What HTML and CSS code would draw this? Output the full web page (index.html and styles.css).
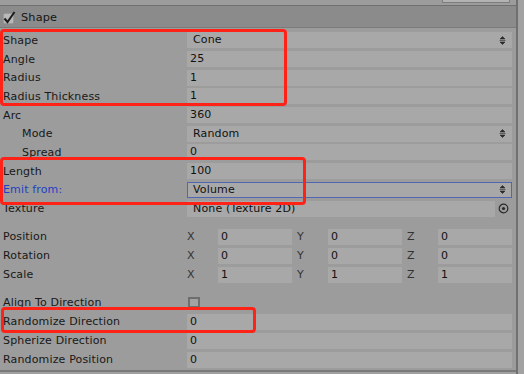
FILE: index.html
```html
<!DOCTYPE html>
<html>
<head>
<meta charset="utf-8">
<link rel="stylesheet" href="styles.css">
</head>
<body>
<div class="page">
  <div class="panel">
    <div class="topstrip"><div class="stub"></div></div>
    <div class="header">
      <svg class="toggle" width="14" height="14" viewBox="0 0 14 14">
        <rect x="0.5" y="2.5" width="10" height="10" rx="1.5" fill="#b9b9b9" stroke="#9a9a9a"/>
        <path d="M1.5 7.5 L4.5 11 L11.5 1" fill="none" stroke="#1c1c1c" stroke-width="2"/>
      </svg>
      <span class="title">Shape</span>
    </div>
    <div class="body">
      <div class="block tight">
        <div class="row"><span class="label">Shape</span><span class="field drop">Cone<svg class="arrows" width="7" height="9" viewBox="0 0 7 9"><path d="M3.5 0.5 L6 3 L1 3 Z M0.5 4.5 H6.5 M1 6 L6 6 L3.5 8.5 Z" fill="#2a2a2a" stroke="#2a2a2a" stroke-width="0.6"/></svg></span></div>
        <div class="row"><span class="label">Angle</span><span class="field">25</span></div>
        <div class="row"><span class="label">Radius</span><span class="field">1</span></div>
        <div class="row"><span class="label">Radius Thickness</span><span class="field">1</span></div>
        <div class="row"><span class="label">Arc</span><span class="field">360</span></div>
        <div class="row"><span class="label indent">Mode</span><span class="field drop">Random<svg class="arrows" width="7" height="9" viewBox="0 0 7 9"><path d="M3.5 0.5 L6 3 L1 3 Z M0.5 4.5 H6.5 M1 6 L6 6 L3.5 8.5 Z" fill="#2a2a2a" stroke="#2a2a2a" stroke-width="0.6"/></svg></span></div>
        <div class="row"><span class="label indent">Spread</span><span class="field">0</span></div>
        <div class="row"><span class="label">Length</span><span class="field">100</span></div>
        <div class="row"><span class="label focus">Emit from:</span><span class="field drop focused">Volume<svg class="arrows" width="7" height="9" viewBox="0 0 7 9"><path d="M3.5 0.5 L6 3 L1 3 Z M0.5 4.5 H6.5 M1 6 L6 6 L3.5 8.5 Z" fill="#2a2a2a" stroke="#2a2a2a" stroke-width="0.6"/></svg></span></div>
        <div class="row"><span class="label">Texture</span><span class="field obj">None (Texture 2D)</span><svg class="picker" width="11" height="11" viewBox="0 0 11 11"><circle cx="5.5" cy="5.5" r="4.3" fill="none" stroke="#2a2a2a" stroke-width="1.2"/><circle cx="5.5" cy="5.5" r="1.6" fill="#2a2a2a"/></svg></div>
      </div>
      <div class="block vec">
        <div class="row"><span class="label">Position</span>
          <div class="vector">
            <div class="comp"><span class="axis">X</span><span class="field">0</span></div>
            <div class="comp"><span class="axis">Y</span><span class="field">0</span></div>
            <div class="comp"><span class="axis">Z</span><span class="field">0</span></div>
          </div>
        </div>
        <div class="row"><span class="label">Rotation</span>
          <div class="vector">
            <div class="comp"><span class="axis">X</span><span class="field">0</span></div>
            <div class="comp"><span class="axis">Y</span><span class="field">0</span></div>
            <div class="comp"><span class="axis">Z</span><span class="field">0</span></div>
          </div>
        </div>
        <div class="row"><span class="label">Scale</span>
          <div class="vector">
            <div class="comp"><span class="axis">X</span><span class="field">1</span></div>
            <div class="comp"><span class="axis">Y</span><span class="field">1</span></div>
            <div class="comp"><span class="axis">Z</span><span class="field">1</span></div>
          </div>
        </div>
      </div>
      <div class="block last">
        <div class="row"><span class="label">Align To Direction</span><span class="check"></span></div>
        <div class="row"><span class="label">Randomize Direction</span><span class="field">0</span></div>
        <div class="row"><span class="label">Spherize Direction</span><span class="field">0</span></div>
        <div class="row"><span class="label">Randomize Position</span><span class="field">0</span></div>
      </div>
    </div>
    <div class="footer"></div>
    <div class="mark m1"></div>
    <div class="mark m2"></div>
    <div class="mark m3"></div>
  </div>
  <div class="scroll"></div>
</div>
</body>
</html>
```
FILE: styles.css
```css
* { box-sizing: border-box; }
html, body { margin: 0; padding: 0; }
body {
  background: #9c9c9c;
  font-family: "DejaVu Sans", Verdana, sans-serif;
  font-size: 11px;
  color: #181818;
  letter-spacing: 0.15px;
}
.page {
  display: flex;
  width: 524px;
  height: 374px;
  overflow: hidden;
}
.panel {
  position: relative;
  width: 516px;
  height: 374px;
  display: flex;
  flex-direction: column;
  background: #9c9c9c;
}
.scroll {
  flex: 1;
  border-left: 2px solid #707070;
  background: #a2a2a2;
}
.topstrip {
  height: 5px;
  display: flex;
}
.stub {
  margin-left: 442px;
  width: 68px;
  height: 3px;
  background: #b3b3b3;
  border: 1px solid #7c7c7c;
  border-top: none;
}
.header {
  height: 23px;
  background: #8b8b8b;
  border-top: 1px solid #707070;
  border-bottom: 1px solid #7b7b7b;
  display: flex;
  align-items: center;
  padding-left: 3px;
  padding-top: 1px;
}
.toggle { flex: none; margin-top: 1px; }
.title { margin-left: 4px; font-size: 11.3px; color: #151515; }
.body {
  padding-top: 3px;
  flex: none;
}
.block.tight .row { height: 18.7px; }
.block.vec { margin-top: 9.5px; }
.block.last { margin-top: 9px; }
.row {
  display: flex;
  align-items: center;
  height: 19px;
  white-space: nowrap;
}
.label {
  flex: none;
  width: 187px;
  padding-left: 3px;
}
.label.indent { padding-left: 22px; }
.label.focus { color: #1f3fc4; }
.field {
  flex: none;
  width: 325px;
  height: 16px;
  line-height: 16px;
  background: #a8a8a8;
  padding-left: 3px;
  color: #111;
}
.field.drop {
  display: flex;
  align-items: center;
  justify-content: space-between;
  padding-left: 6px;
  padding-right: 6px;
}
.field.focused {
  border: 1px solid #5366b4;
  line-height: 14px;
  padding-left: 5px;
  padding-right: 5px;
}
.arrows { flex: none; }
.field.obj {
  width: 308px;
  padding-left: 6px;
}
.picker { flex: none; margin-left: 3px; }
.vector {
  flex: none;
  margin-left: -5px;
  width: 330px;
  display: flex;
}
.comp {
  flex: 1;
  display: flex;
  align-items: center;
}
.axis {
  flex: none;
  width: 36px;
  padding-left: 5px;
  color: #333;
}
.comp .field {
  width: 74px;
}
.check {
  flex: none;
  width: 12px;
  height: 11px;
  margin-left: 1px;
  border: 2px solid #6e6e6e;
  background: #a2a2a2;
}
.footer {
  margin-top: 1px;
  border-top: 2px solid #7a7a7a;
  flex: 1;
  background: #a0a0a0;
}
.mark {
  position: absolute;
  border: 3px solid #ff2317;
  border-radius: 4px;
}
.m1 { left: 0; top: 29px; width: 287px; height: 77px; }
.m2 { left: 0; top: 157px; width: 306px; height: 48px; }
.m3 { left: 1px; top: 307px; width: 255px; height: 26px; }
```
